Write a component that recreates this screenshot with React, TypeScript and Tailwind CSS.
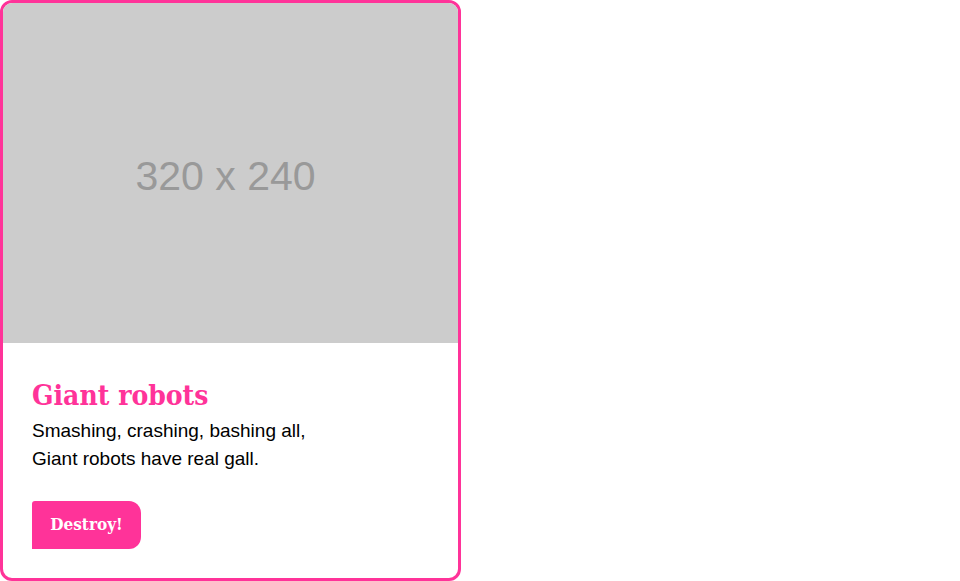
export default function App() {
  return (
    <div className="w-[960px] h-[581px] bg-white">
      {/* CARD */}
      <div className="w-[461px] h-[581px] border-[3px] border-[#ff3399] rounded-[12px] overflow-hidden flex flex-col">
        {/* IMAGE PLACEHOLDER */}
        <div className="h-[340px] bg-[#cccccc] flex items-center justify-center shrink-0">
          <span className="text-[41px] text-[#999999] font-['Liberation_Sans',Arial,sans-serif] -ml-[10px] mt-[8px]">
            320 x 240
          </span>
        </div>

        {/* CONTENT */}
        <div className="px-[29px] pt-[36px] pb-[28px]">
          <h2 className="text-[28px] leading-[34px] font-bold text-[#ff3399] font-['DejaVu_Serif_Condensed','DejaVu_Serif',serif]">
            Giant robots
          </h2>
          <p className="text-[19px] leading-[28px] text-black font-['Liberation_Sans',Arial,sans-serif] mt-[4px]">
            Smashing, crashing, bashing all,
            <br />
            Giant robots have real gall.
          </p>
          <button className="mt-[28px] w-[109px] h-[48px] bg-[#ff3399] text-white text-[17px] font-bold font-['DejaVu_Serif_Condensed','DejaVu_Serif',serif] rounded-tl-[3px] rounded-tr-[12px] rounded-br-[12px] rounded-bl-none">
            Destroy!
          </button>
        </div>
      </div>
    </div>
  );
}
